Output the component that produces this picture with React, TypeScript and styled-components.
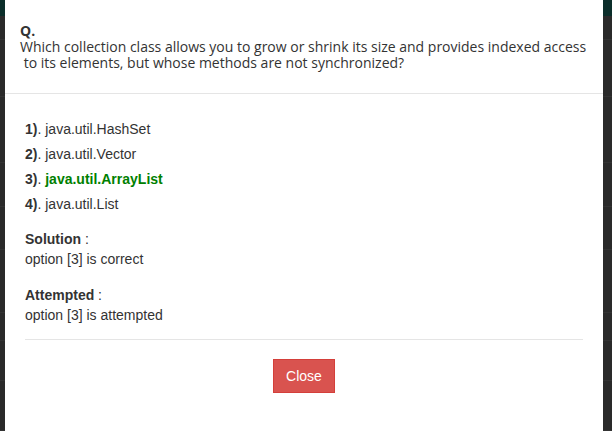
import React from "react";
import styled, { createGlobalStyle } from "styled-components";

const Global = createGlobalStyle`
  html, body { margin: 0; padding: 0; }
  body { width: 612px; height: 431px; overflow: hidden; background: #282828; }
`;

const Stage = styled.div`
  position: relative;
  width: 612px;
  height: 431px;
  overflow: hidden;
`;

const Underlay = styled.div`
  position: absolute;
  inset: 0;
  display: flex;
  flex-direction: column;
  background: #2a2a2a;
`;

const NavBar = styled.div`
  height: 16px;
  background: #0b2e2a;
`;

const UnderRow = styled.div<{ $h: number }>`
  height: ${(p) => p.$h}px;
  border-bottom: 1px solid #333;
`;

const Overlay = styled.div`
  position: absolute;
  inset: 0;
  display: flex;
  padding-left: 5px;
`;

const Modal = styled.div`
  width: 598px;
  height: 100%;
  background: #fff;
  display: flex;
  flex-direction: column;
`;

const Header = styled.div`
  padding: 22px 15px 23px;
  border-bottom: 1px solid #e5e5e5;
  font-family: "Open Sans", "Liberation Sans", sans-serif;
  font-size: 14px;
  color: #333;
`;

const QLabel = styled.div`
  font-weight: 700;
  line-height: 17px;
`;

const QText = styled.div`
  line-height: 15.5px;
`;

const Body = styled.div`
  padding: 23px 20px 0;
  font-family: "Liberation Sans", Arial, sans-serif;
  font-size: 14px;
  color: #333;
  display: flex;
  flex-direction: column;
`;

const Option = styled.div`
  line-height: 25px;
`;

const Num = styled.b`
  font-weight: 700;
`;

const Correct = styled.b`
  font-weight: 700;
  color: #008000;
`;

const Block = styled.div<{ $mt: number }>`
  margin-top: ${(p) => p.$mt}px;
  line-height: 20px;
`;

const Rule = styled.hr`
  margin: 14px 0 19px;
  border: 0;
  border-top: 1px solid #e5e5e5;
  height: 0;
`;

const Footer = styled.div`
  display: flex;
  justify-content: center;
`;

const CloseButton = styled.button`
  font-family: "Liberation Sans", Arial, sans-serif;
  font-size: 14px;
  line-height: 20px;
  padding: 6px 12px;
  color: #fff;
  background: #d9534f;
  border: 1px solid #d43f3a;
  border-radius: 0;
  cursor: pointer;
`;

const rows = [24, 57, 66, 44, 43, 63, 27, 40, 50];

export default function App() {
  return (
    <Stage>
      <Global />
      <Underlay>
        <NavBar />
        {rows.map((h, i) => (
          <UnderRow key={i} $h={h} />
        ))}
      </Underlay>
      <Overlay>
        <Modal>
          <Header>
            <QLabel>Q.</QLabel>
            <QText>
              Which collection class allows you to grow or shrink its size and provides indexed access
              <br />
              {"\u00a0to its elements, but whose methods are not synchronized?"}
            </QText>
          </Header>
          <Body>
            <Option>
              <Num>1)</Num>. java.util.HashSet
            </Option>
            <Option>
              <Num>2)</Num>. java.util.Vector
            </Option>
            <Option>
              <Num>3)</Num>. <Correct>java.util.ArrayList</Correct>
            </Option>
            <Option>
              <Num>4)</Num>. java.util.List
            </Option>
            <Block $mt={12}>
              <Num>Solution</Num> :
              <br />
              option [3] is correct
            </Block>
            <Block $mt={16}>
              <Num>Attempted</Num> :
              <br />
              option [3] is attempted
            </Block>
            <Rule />
            <Footer>
              <CloseButton>Close</CloseButton>
            </Footer>
          </Body>
        </Modal>
      </Overlay>
    </Stage>
  );
}
